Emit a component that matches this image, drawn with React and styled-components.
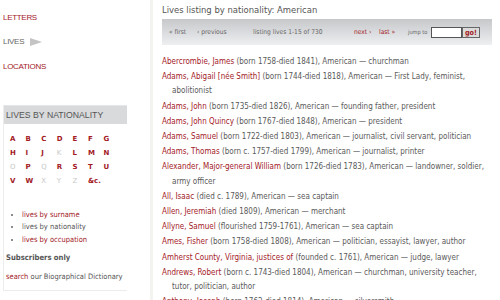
import React from "react";
import styled, { createGlobalStyle } from "styled-components";

const Global = createGlobalStyle`
  html, body { margin: 0; padding: 0; background: #fff; }
  body { font-family: "DejaVu Sans Condensed", "DejaVu Sans", sans-serif; color: #555; }
  a { text-decoration: none; }
`;

const RED = "#a3191f";

const Page = styled.div`
  display: flex;
  width: 500px;
  height: 300px;
  overflow: hidden;
`;

const Sidebar = styled.div`
  width: 150px;
  flex: none;
  border-right: 3px solid #f3f3ef;
  display: flex;
  flex-direction: column;
`;

const TopNav = styled.nav`
  display: flex;
  flex-direction: column;
  padding: 12px 0 0 3px;
  gap: 14px;
`;

const NavItem = styled.a`
  display: flex;
  align-items: center;
  gap: 6px;
  height: 10.5px;
  font-family: "Liberation Sans", Arial, sans-serif;
  font-size: 8px;
  letter-spacing: -0.3px;
  color: ${(p) => (p.$current ? "#666" : RED)};
`;

const Arrow = styled.span`
  width: 0;
  height: 0;
  border-top: 4px solid transparent;
  border-bottom: 4px solid transparent;
  border-left: 12px solid #c4c4c4;
`;

const Panel = styled.section`
  margin: 33px 23px 0 3px;
  border-left: 1px solid #ececec;
  border-bottom: 1px solid #ececec;
  padding-bottom: 9px;
`;

const PanelHead = styled.h2`
  margin: 0;
  height: 19px;
  background: #d8dadc;
  border-top: 1px solid #e4e6e8;
  box-sizing: border-box;
  display: flex;
  align-items: center;
  padding-left: 2px;
  font-family: "Liberation Sans", Arial, sans-serif;
  font-weight: normal;
  font-size: 8.7px;
  color: #555;
`;

const LetterGrid = styled.div`
  display: grid;
  grid-template-columns: repeat(7, 15.6px);
  grid-auto-rows: 14.3px;
  padding: 8px 0 0 6px;
`;

const Letter = styled.a`
  font-family: "DejaVu Sans", sans-serif;
  font-size: 7px;
  line-height: 14.3px;
  color: ${(p) => (p.$off ? "#c9c9c9" : RED)};
  font-weight: ${(p) => (p.$off ? "normal" : "bold")};
`;

const Bullets = styled.ul`
  margin: 20px 0 0 0;
  padding: 0 0 0 18px;
  list-style: disc;
  font-size: 7.5px;
  line-height: 12.6px;
  color: #555;
  li::marker { color: #666; font-size: 7px; }
`;

const BulletLink = styled.a`
  color: ${(p) => (p.$current ? "#555" : RED)};
`;

const SubHead = styled.h3`
  margin: 7px 0 0 2px;
  font-size: 7.6px;
  font-weight: bold;
  color: #555;
`;

const SearchLine = styled.p`
  margin: 10px 0 0 2px;
  font-size: 7.5px;
  white-space: nowrap;
  color: #555;
  a { color: ${RED}; }
`;

const Main = styled.main`
  flex: 1;
  padding: 3px 8px 0 9px;
  min-width: 0;
`;

const Title = styled.h1`
  margin: 0;
  font-size: 9.4px;
  font-weight: normal;
  color: #555;
  line-height: 14px;
`;

const Pager = styled.div`
  margin-top: 2px;
  height: 26px;
  display: grid;
  grid-template-columns: 28px 56px 101px 25px 29px 23px 31px 18px;
  align-items: center;
  padding: 0 0 0 7px;
  background: linear-gradient(#c6c8ca, #dcdde0 55%, #eeeff0);
  font-size: 6.6px;
  color: #666;
`;

const PagerLink = styled.a`
  color: ${(p) => (p.$active ? RED : "#666")};
  white-space: nowrap;
`;

const Count = styled.span`
  white-space: nowrap;
`;

const JumpLabel = styled.span`
  font-size: 5.6px;
  white-space: nowrap;
`;

const JumpInput = styled.input`
  width: 31px;
  height: 11px;
  box-sizing: border-box;
  border: 1px solid #555;
  background: #fff;
  padding: 0;
  margin: 0;
`;

const GoButton = styled.button`
  height: 11px;
  width: 18px;
  box-sizing: border-box;
  border: 1px solid #666;
  background: #dcdcdc;
  color: ${RED};
  font-family: inherit;
  font-weight: bold;
  font-size: 7.2px;
  padding: 0;
  margin: 0;
  line-height: 9px;
`;

const List = styled.ul`
  list-style: none;
  margin: 10px -3px 0 0;
  padding: 0;
`;

const Entry = styled.li`
  font-size: 8px;
  line-height: 14.2px;
  padding-left: 10px;
  text-indent: -10px;
  margin-bottom: 1px;
  color: #5a5a5a;
`;

const Name = styled.a`
  color: ${RED};
`;

const letters = [
  ["A", 0], ["B", 0], ["C", 0], ["D", 0], ["E", 0], ["F", 0], ["G", 0],
  ["H", 0], ["I", 0], ["J", 0], ["K", 1], ["L", 0], ["M", 0], ["N", 0],
  ["O", 1], ["P", 0], ["Q", 1], ["R", 0], ["S", 0], ["T", 0], ["U", 0],
  ["V", 0], ["W", 0], ["X", 1], ["Y", 1], ["Z", 1], ["&c.", 0],
];

const entries = [
  ["Abercrombie, James", " (born 1758-died 1841), American — churchman"],
  ["Adams, Abigail [née Smith]", " (born 1744-died 1818), American — First Lady, feminist, abolitionist"],
  ["Adams, John", " (born 1735-died 1826), American — founding father, president"],
  ["Adams, John Quincy", " (born 1767-died 1848), American — president"],
  ["Adams, Samuel", " (born 1722-died 1803), American — journalist, civil servant, politician"],
  ["Adams, Thomas", " (born c. 1757-died 1799), American — journalist, printer"],
  ["Alexander, Major-general William", " (born 1726-died 1783), American — landowner, soldier, army officer"],
  ["All, Isaac", " (died c. 1789), American — sea captain"],
  ["Allen, Jeremiah", " (died 1809), American — merchant"],
  ["Allyne, Samuel", " (flourished 1759-1761), American — sea captain"],
  ["Ames, Fisher", " (born 1758-died 1808), American — politician, essayist, lawyer, author"],
  ["Amherst County, Virginia, justices of", " (founded c. 1761), American — judge, lawyer"],
  ["Andrews, Robert", " (born c. 1743-died 1804), American — churchman, university teacher, tutor, politician, author"],
  ["Anthony, Joseph", " (born 1762-died 1814), American — silversmith"],
];

export default function App() {
  return (
    <>
      <Global />
      <Page>
        <Sidebar>
          <TopNav>
            <NavItem>LETTERS</NavItem>
            <NavItem $current>LIVES <Arrow /></NavItem>
            <NavItem>LOCATIONS</NavItem>
          </TopNav>
          <Panel>
            <PanelHead>LIVES BY NATIONALITY</PanelHead>
            <LetterGrid>
              {letters.map(([l, off]) => (
                <Letter key={l} $off={!!off}>{l}</Letter>
              ))}
            </LetterGrid>
            <Bullets>
              <li><BulletLink>lives by surname</BulletLink></li>
              <li><BulletLink $current>lives by nationality</BulletLink></li>
              <li><BulletLink>lives by occupation</BulletLink></li>
            </Bullets>
            <SubHead>Subscribers only</SubHead>
            <SearchLine><a>search</a> our Biographical Dictionary</SearchLine>
          </Panel>
        </Sidebar>
        <Main>
          <Title>Lives listing by nationality: American</Title>
          <Pager>
            <PagerLink>« first</PagerLink>
            <PagerLink>‹ previous</PagerLink>
            <Count>listing lives 1-15 of 730</Count>
            <PagerLink $active>next ›</PagerLink>
            <PagerLink $active>last »</PagerLink>
            <JumpLabel>jump to</JumpLabel>
            <JumpInput />
            <GoButton>go!</GoButton>
          </Pager>
          <List>
            {entries.map(([n, d]) => (
              <Entry key={n}><Name>{n}</Name>{d}</Entry>
            ))}
          </List>
        </Main>
      </Page>
    </>
  );
}
